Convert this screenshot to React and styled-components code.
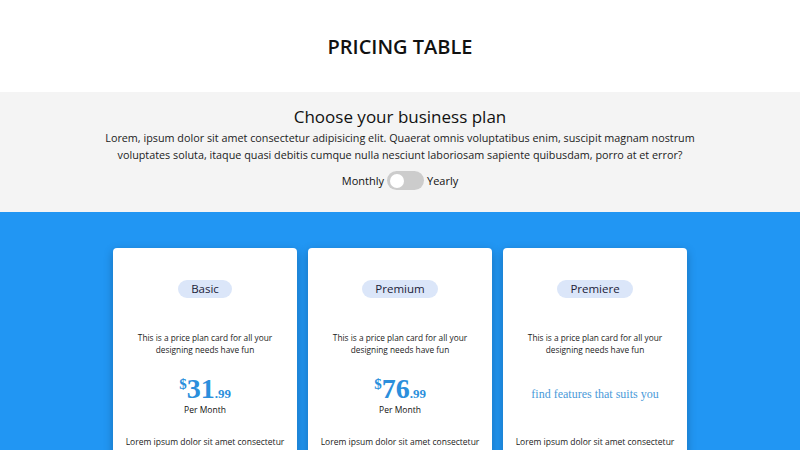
import React, { useState } from 'react';
import styled, { createGlobalStyle } from 'styled-components';

const GlobalStyle = createGlobalStyle`
  * { box-sizing: border-box; }
  body {
    margin: 0;
    font-family: 'Open Sans', 'Noto Sans', sans-serif;
    color: #111;
    background: #2196f3;
  }
`;

const Header = styled.header`
  height: 92px;
  background: #fff;
  display: flex;
  align-items: center;
  justify-content: center;
`;

const Title = styled.h1`
  margin: 0;
  font-size: 20px;
  font-weight: 600;
`;

const Intro = styled.section`
  background: #f4f4f4;
  height: 120px;
  padding-top: 13px;
  display: flex;
  flex-direction: column;
  align-items: center;
`;

const Subtitle = styled.h2`
  margin: 0;
  font-size: 17px;
  font-weight: 500;
  line-height: 24px;
`;

const Lead = styled.p`
  margin: 0;
  max-width: 620px;
  font-size: 10.8px;
  line-height: 17px;
  text-align: center;
  color: #222;
`;

const ToggleRow = styled.div`
  margin-top: 8px;
  display: flex;
  align-items: center;
  gap: 3px;
  font-size: 11px;
`;

const Switch = styled.button`
  width: 37px;
  height: 19px;
  border: none;
  padding: 0;
  border-radius: 10px;
  background: ${({ $on }) => ($on ? '#2196f3' : '#cccccc')};
  position: relative;
  cursor: pointer;

  &::after {
    content: '';
    position: absolute;
    top: 2.5px;
    left: ${({ $on }) => ($on ? '20px' : '3px')};
    width: 14px;
    height: 14px;
    border-radius: 50%;
    background: #fff;
  }
`;

const Plans = styled.section`
  background: #2196f3;
  height: 238px;
  padding-top: 36px;
  display: grid;
  grid-template-columns: repeat(3, 184px);
  justify-content: center;
  column-gap: 11px;
  overflow: hidden;
`;

const Card = styled.div`
  background: #fff;
  border-radius: 4px;
  height: 260px;
  padding-top: 32px;
  display: flex;
  flex-direction: column;
  align-items: center;
  box-shadow: 0 3px 10px rgba(0, 0, 0, 0.25);
`;

const Badge = styled.span`
  height: 18px;
  padding: 0 13px;
  border-radius: 9px;
  background: #dbe6f9;
  color: #1c2238;
  font-size: 11.5px;
  font-weight: 500;
  line-height: 18px;
`;

const Desc = styled.p`
  margin: 34px 0 0;
  width: 140px;
  font-size: 8.3px;
  line-height: 12px;
  text-align: center;
  color: #222;
`;

const PriceBox = styled.div`
  margin-top: 16px;
  height: 44px;
  display: flex;
  flex-direction: column;
  align-items: center;
  justify-content: center;
`;

const Price = styled.div`
  font-family: 'Liberation Serif', 'Times New Roman', serif;
  font-weight: 700;
  color: #2b8fdc;
  display: flex;
  align-items: baseline;
  line-height: 23px;
  margin-top: 2px;
`;

const Currency = styled.span`
  font-size: 15px;
  align-self: flex-start;
  line-height: 14px;
`;

const Amount = styled.span`
  font-size: 28px;
`;

const Cents = styled.span`
  font-size: 13px;
`;

const Period = styled.span`
  font-size: 8.5px;
  line-height: 9px;
  color: #111;
`;

const Tagline = styled.span`
  font-family: 'Liberation Serif', 'Times New Roman', serif;
  font-size: 12px;
  color: #4a9ad9;
`;

const Feature = styled.p`
  margin: 20px 0 0;
  font-size: 8.5px;
  color: #222;
`;

const plans = [
  { name: 'Basic', price: '31', cents: '.99' },
  { name: 'Premium', price: '76', cents: '.99' },
  { name: 'Premiere' },
];

export default function App() {
  const [yearly, setYearly] = useState(false);

  return (
    <>
      <GlobalStyle />
      <Header>
        <Title>PRICING TABLE</Title>
      </Header>
      <Intro>
        <Subtitle>Choose your business plan</Subtitle>
        <Lead>
          Lorem, ipsum dolor sit amet consectetur adipisicing elit. Quaerat omnis voluptatibus enim, suscipit magnam nostrum
          voluptates soluta, itaque quasi debitis cumque nulla nesciunt laboriosam sapiente quibusdam, porro at et error?
        </Lead>
        <ToggleRow>
          <span>Monthly</span>
          <Switch $on={yearly} onClick={() => setYearly(!yearly)} aria-label="toggle billing" />
          <span>Yearly</span>
        </ToggleRow>
      </Intro>
      <Plans>
        {plans.map((p) => (
          <Card key={p.name}>
            <Badge>{p.name}</Badge>
            <Desc>This is a price plan card for all your designing needs have fun</Desc>
            <PriceBox>
              {p.price ? (
                <>
                  <Price>
                    <Currency>$</Currency>
                    <Amount>{p.price}</Amount>
                    <Cents>{p.cents}</Cents>
                  </Price>
                  <Period>Per Month</Period>
                </>
              ) : (
                <Tagline>find features that suits you</Tagline>
              )}
            </PriceBox>
            <Feature>Lorem ipsum dolor sit amet consectetur</Feature>
          </Card>
        ))}
      </Plans>
    </>
  );
}
